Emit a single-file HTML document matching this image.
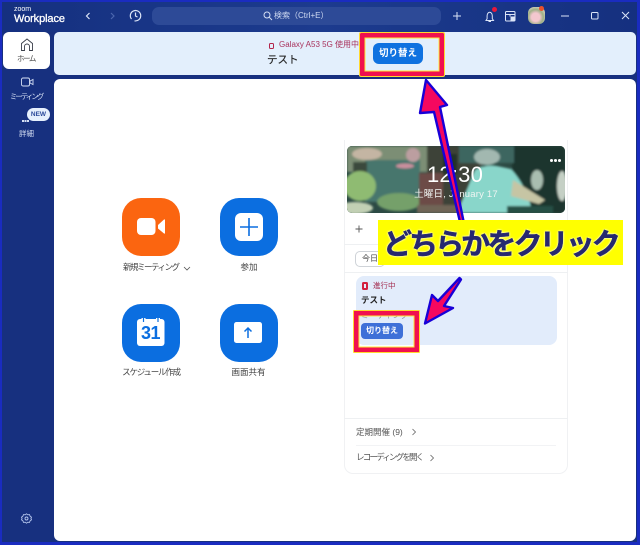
<!DOCTYPE html>
<html lang="ja"><head><meta charset="utf-8"><title>Zoom Workplace</title>
<style>
*{box-sizing:border-box;margin:0;padding:0}
html,body{width:640px;height:545px;overflow:hidden;background:#17307f}
body{position:relative;font-family:"Liberation Sans","Noto Sans CJK JP",sans-serif;color:#333}
.a{position:absolute}
.t{position:absolute;white-space:nowrap;line-height:1.2}
.c{transform:translateX(-50%)}
.act{position:absolute;width:58px;height:58px;border-radius:19px;background:#0b6ee0}
svg{position:absolute;overflow:visible}
</style></head><body>
<div class="a" style="left:0;top:0;width:640px;height:32px;background:linear-gradient(90deg,#15307f,#1c3b8e 50%,#15307f)"></div>

<!-- title bar -->
<div class="t" style="left:14px;top:6px;font-size:7px;color:#fff">zoom</div>
<div class="t" style="left:14px;top:13px;font-size:11px;color:#fff;-webkit-text-stroke:.3px #fff;letter-spacing:-.1px">Workplace</div>
<svg style="left:0;top:0" width="640" height="32" fill="none" stroke="#dbe4f7" stroke-width="1.200">
<path d="M89.500 13l-3 3 3 3"/><path d="M111 13l3 3-3 3" stroke="#4b66ae"/>
<path d="M131.500 19a5.200 5.200 0 1 1 3 1.800M135.500 12.500v3.500l2 1"/>
<path d="M453 16h8M457 12v8" stroke-width="1"/>
<path d="M486 20.500h7.500l-1.200-1.800v-3a2.600 3.400 0 0 0-5.200 0v3zM488.500 21.500h2.500" stroke-width="1"/>
<rect x="505.500" y="11.500" width="9.500" height="9.500" rx="1" stroke-width="1"/><path d="M505.500 14.500h9.500M510 14.500v2" stroke-width="1"/><rect x="510.500" y="16.500" width="4.500" height="4.500" fill="#dbe4f7" stroke="none"/>
<path d="M561 16h8" stroke-width="1"/><rect x="591.500" y="12.500" width="6.500" height="6.500" rx="1" stroke-width="1"/><path d="M622 12l7 7M629 12l-7 7" stroke-width="1"/>
</svg>
<div class="a" style="left:152px;top:7px;width:289px;height:18px;border-radius:7px;background:#2d4a97"></div>
<svg style="left:263px;top:11px" width="10" height="10" fill="none" stroke="#d5dff4" stroke-width="1"><circle cx="4" cy="4" r="3"/><path d="M6.200 6.200L9 9"/></svg>
<div class="t" style="left:274px;top:10.500px;font-size:8px;color:#cfdaf2">検索（Ctrl+E）</div>
<div class="a" style="left:492px;top:7px;width:5px;height:5px;border-radius:50%;background:#e8193c"></div>
<div class="a" style="left:528px;top:7px;width:17px;height:17px;border-radius:6px;background:radial-gradient(circle at 45% 60%,#f3c7cf 0 30%,#9eb087 55%,#d8d3bd 80%)"></div>
<div class="a" style="left:539px;top:6px;width:5px;height:5px;border-radius:50%;background:#e8502c"></div>

<!-- sidebar -->
<div class="a" style="left:3px;top:32px;width:47px;height:37px;background:#fff;border-radius:6px"></div>
<svg style="left:20px;top:38px" width="14" height="14" fill="none" stroke="#3a3f4a" stroke-width=".9"><path d="M1.500 12.500v-7L7 1l5.500 4.500v7h-3V8.500a2.500 2.500 0 0 0-5 0v4z"/></svg>
<div class="t c" style="left:26px;top:54px;font-size:7.500px;letter-spacing:-1.400px;color:#444">ホーム</div>
<svg style="left:21px;top:77px" width="13" height="11" fill="none" stroke="#d5dff4" stroke-width=".9"><rect x=".5" y="1" width="8" height="8" rx="1.500"/><path d="M9 4l3-1.500v5L9 6z"/></svg>
<div class="t c" style="left:26px;top:92px;font-size:7.500px;letter-spacing:-2px;color:#d5dff4">ミーティング</div>
<div class="a" style="left:22px;top:120px;width:1.500px;height:1.500px;background:#d5dff4;box-shadow:2.500px 0 #d5dff4,5px 0 #d5dff4"></div>
<div class="a" style="left:27px;top:108px;width:23px;height:13px;border-radius:7px;background:#e6f0fd;color:#2c4a9a;font-size:6.500px;font-weight:bold;line-height:13px;text-align:center">NEW</div>
<div class="t c" style="left:26.500px;top:129px;font-size:7.500px;color:#d5dff4">詳細</div>
<svg style="left:21px;top:513px" width="11" height="11" fill="none" stroke="#b5c6ee" stroke-width=".9"><path d="M5.500 .8l1.300 1 1.700-.2.600 1.600 1.400 1-.6 1.300.6 1.300-1.400 1-.6 1.600-1.700-.2-1.300 1-1.300-1-1.700.2-.6-1.600-1.400-1 .6-1.300-.6-1.300 1.400-1 .6-1.600 1.700.2z"/><circle cx="5.500" cy="5.500" r="1.500"/></svg>

<!-- banner -->
<div class="a" style="left:54px;top:32px;width:582px;height:43px;background:#e3effc;border-radius:5px"></div>
<div class="a" style="left:269px;top:42.500px;width:5px;height:6px;border:1.500px solid #b3244a;border-radius:1.500px"></div>
<div class="t" style="left:279px;top:40px;font-size:8px;color:#a8325c">Galaxy A53 5G 使用中</div>
<div class="t" style="left:267px;top:54px;font-size:10.500px;color:#222;-webkit-text-stroke:.2px #222">テスト</div>
<div class="a" style="left:373px;top:43px;width:50px;height:21px;background:#0f72e0;border-radius:6px;color:#fff;font-size:9.500px;font-weight:bold;line-height:21px;text-align:center">切り替え</div>

<!-- main -->
<div class="a" style="left:54px;top:79px;width:582px;height:462px;background:#fff;border-radius:6px"></div>

<!-- actions -->
<div class="act" style="left:122px;top:198px;background:#fb6510"></div>
<svg style="left:122px;top:198px" width="58" height="58" fill="#fff"><rect x="15" y="20" width="18.500" height="17" rx="4"/><path d="M36 27l6-5.500a.6.600 0 0 1 1 .4v13.200a.6.600 0 0 1-1 .4L36 30.500z"/></svg>
<div class="act" style="left:220px;top:198px"></div>
<svg style="left:220px;top:198px" width="58" height="58"><rect x="15" y="15" width="28" height="28" rx="6" fill="#fff"/><path d="M29 20v18M20 29h18" stroke="#0b6ee0" stroke-width="1.600" fill="none"/></svg>
<div class="act" style="left:122px;top:304px"></div>
<svg style="left:122px;top:304px" width="58" height="58"><rect x="15" y="15" width="27.500" height="27" rx="3" fill="#fff"/><path d="M21.500 14v4M36 14v4" stroke="#fff" stroke-width="4"/><path d="M21.500 13v5M36 13v5" stroke="#0b6ee0" stroke-width="1.200" fill="none"/></svg>
<div class="t" style="left:122px;top:323px;width:57px;text-align:center;font-size:18px;font-weight:bold;color:#0b6ee0;letter-spacing:-.5px">31</div>
<div class="act" style="left:220px;top:304px"></div>
<svg style="left:220px;top:304px" width="58" height="58"><rect x="14" y="18" width="28" height="21" rx="2.500" fill="#fff"/><path d="M28 34v-10M24.500 27.500l3.500-3.500 3.500 3.500" stroke="#0b6ee0" stroke-width="1.500" fill="none"/></svg>
<div class="t" style="left:123px;top:262px;font-size:8.500px;letter-spacing:-1.500px;color:#444">新規ミーティング</div>
<svg style="left:183px;top:266px" width="8" height="5" fill="none" stroke="#555" stroke-width=".8"><path d="M1 1l3 3 3-3"/></svg>
<div class="t c" style="left:249px;top:262px;font-size:8.500px;color:#444">参加</div>
<div class="t c" style="left:151px;top:367px;font-size:8.500px;letter-spacing:-1.200px;color:#444">スケジュール作成</div>
<div class="t c" style="left:248.500px;top:367px;font-size:8.500px;color:#444">画面共有</div>

<!-- calendar panel -->
<div class="a" style="left:344px;top:140px;width:224px;height:334px;border:1px solid #f0f1f3;border-top:none;border-radius:0 0 9px 9px"></div>
<div class="a" style="left:347px;top:146px;width:218px;height:67px;border-radius:5px;overflow:hidden;background:#2f4f47">
<svg style="left:0;top:0" width="218" height="67">
<defs><filter id="b" x="-30%" y="-30%" width="160%" height="160%"><feGaussianBlur stdDeviation="1.100"/></filter></defs>
<rect width="218" height="67" fill="#2c4a44"/>
<g filter="url(#b)">
<rect x="0" y="0" width="80" height="26" fill="#7c8e74"/>
<rect x="80" y="0" width="55" height="67" fill="#3c4238"/>
<rect x="18" y="14" width="55" height="42" fill="#47766d"/>
<rect x="6" y="16" width="14" height="14" fill="#3b4a3c"/>
<ellipse cx="13" cy="40" rx="16" ry="15" fill="#8fbb72"/>
<ellipse cx="8" cy="62" rx="18" ry="6" fill="#c2d0b4"/>
<ellipse cx="52" cy="56" rx="22" ry="9" fill="#74a06a"/>
<ellipse cx="20" cy="8" rx="15" ry="6" fill="#c4b5a3"/>
<ellipse cx="58" cy="20" rx="9" ry="2.500" fill="#c98f9d"/>
<ellipse cx="66" cy="9" rx="7" ry="7" fill="#bc9ea0"/>
<rect x="72" y="27" width="24" height="32" fill="#6c4c47"/>
<rect x="70" y="59" width="44" height="8" fill="#6f6557"/>
<rect x="96" y="8" width="14" height="20" fill="#23302c"/>
<rect x="165" y="0" width="53" height="67" fill="#1a352f"/>
<rect x="112" y="0" width="55" height="17" fill="#3e6660"/>
<path d="M128 24q10-6 22-4l14 3q14 15 20 38l-12 6h-62q8-18 18-43z" fill="#89d6ca"/>
<path d="M166 34l32 20-6 4-28-8z" fill="#c6c5a4"/>
<path d="M160 60h46v7h-46z" fill="#274f45"/>
<ellipse cx="140" cy="11" rx="13" ry="8" fill="#a2b8b0"/>
<ellipse cx="190" cy="34" rx="6" ry="10" fill="#a9bdb0"/>
<ellipse cx="215" cy="40" rx="5" ry="15" fill="#c5d0c5"/>
</g>
</svg>
<div class="a" style="left:203px;top:13px;width:3px;height:3px;background:#fff;border-radius:50%;box-shadow:4px 0 #fff,8px 0 #fff"></div>
<div class="t c" style="left:108px;top:16px;font-size:22px;color:#fff;letter-spacing:.2px">12:30</div>
<div class="t c" style="left:109px;top:43px;font-size:9.500px;color:#f0f4f2;letter-spacing:.2px">土曜日, January 17</div>
</div>
<svg style="left:355px;top:225px" width="8" height="8" fill="none" stroke="#555" stroke-width=".9"><path d="M4 .5v7M.5 4h7"/></svg>
<div class="a" style="left:344px;top:244px;width:224px;height:1px;background:#eef0f2"></div>
<div class="a" style="left:355px;top:251px;width:30px;height:16px;border:1px solid #cfd3d8;border-radius:5px;font-size:8px;line-height:14px;padding-left:6px;color:#444">今日</div>
<div class="a" style="left:344px;top:272px;width:224px;height:1px;background:#eef0f2"></div>
<div class="a" style="left:356px;top:276px;width:201px;height:69px;background:#e2ecfb;border-radius:8px"></div>
<div class="a" style="left:362px;top:282px;width:6px;height:8px;border:2px solid #d3203f;border-radius:1.500px"></div>
<div class="t" style="left:373px;top:281px;font-size:7.500px;color:#a32a4e">進行中</div>
<div class="t" style="left:361px;top:295px;font-size:8.500px;font-weight:bold;color:#222">テスト</div>
<div class="t" style="left:361px;top:311px;font-size:8px;color:#8a8f98">ミーティング</div>
<div class="a" style="left:361px;top:323px;width:42px;height:16px;border-radius:4px;background:#3e70d8;color:#fff;font-size:8px;font-weight:bold;line-height:16px;text-align:center">切り替え</div>
<div class="a" style="left:344px;top:418px;width:224px;height:1px;background:#eef0f2"></div>
<div class="t" style="left:356px;top:427px;font-size:8.500px;color:#555">定期開催 (9)</div>
<svg style="left:411px;top:428px" width="6" height="8" fill="none" stroke="#666" stroke-width=".8"><path d="M1.500 1l3 3-3 3"/></svg>
<div class="a" style="left:356px;top:445px;width:200px;height:1px;background:#f2f3f5"></div>
<div class="t" style="left:356px;top:452px;font-size:8.500px;letter-spacing:-1.800px;color:#555">レコーディングを開く</div>
<svg style="left:429px;top:454px" width="6" height="8" fill="none" stroke="#666" stroke-width=".8"><path d="M1.500 1l3 3-3 3"/></svg>

<!-- annotation boxes -->
<div class="a" style="left:359px;top:32px;width:86px;height:45px;border:1px solid #ffd92e;box-shadow:inset 0 0 0 4.500px #f0104f,inset 0 0 0 5.500px #ffe838;border-radius:2px"></div>
<div class="a" style="left:353px;top:310px;width:67px;height:43px;border:1px solid #ffd92e;box-shadow:inset 0 0 0 4.500px #f0104f,inset 0 0 0 5.500px #ffe838;border-radius:1px"></div>

<!-- arrows -->
<svg style="left:0;top:0" width="640" height="545">
<path d="M426 80L447 105 440 107 463.500 221 460 222 434 112 420 113z" fill="#f5085f" stroke="#1800d8" stroke-width="2.400" stroke-linejoin="round"/>
<path d="M425 323.500L432 295 438 301 459.500 278 461 279.500 444 306 453 308z" fill="#f5085f" stroke="#1800d8" stroke-width="2.400" stroke-linejoin="round"/>
</svg>

<!-- yellow label -->
<div class="a" style="left:378px;top:220px;width:245px;height:45px;background:#ffff00"></div>
<div class="t" style="left:383px;top:224px;width:236px;font-size:29px;font-weight:700;color:#27286f;letter-spacing:-2.900px;line-height:36px;font-family:'Noto Sans CJK JP',sans-serif;-webkit-text-stroke:.5px #27286f;text-shadow:0 0 2px #fff,0 0 2px #fff">どちらかをクリック</div>

<!-- window border -->
<div class="a" style="inset:0;border:2px solid #1a2cc0;border-bottom-width:3px;border-right-width:3px;pointer-events:none"></div>
</body></html>
